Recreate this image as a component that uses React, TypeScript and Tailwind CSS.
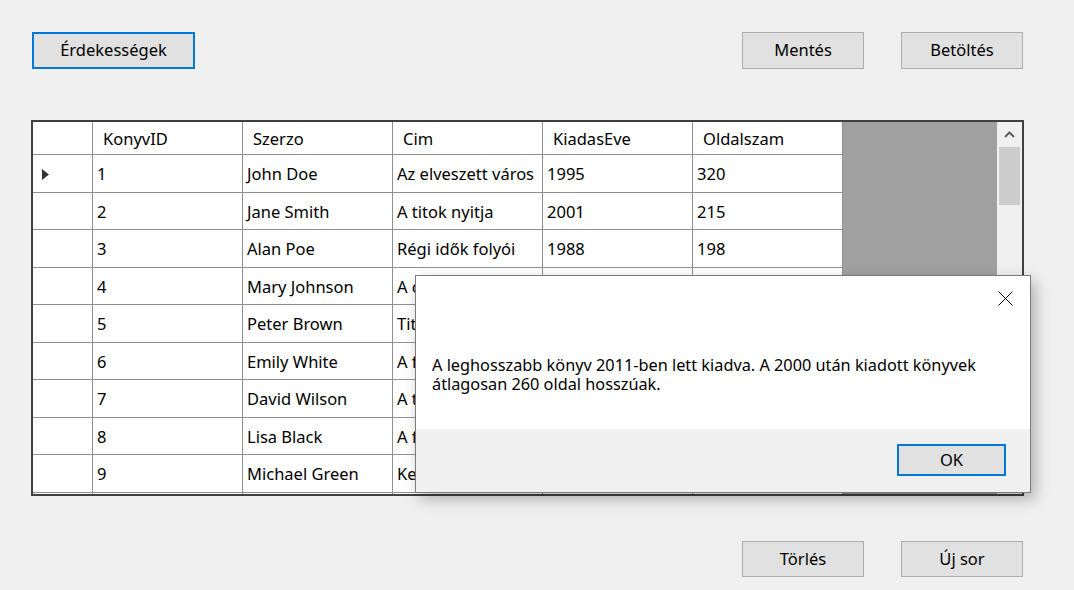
import React from 'react';

interface Book {
    id: number | string;
    szerzo: string;
    cim: string;
    ev: string;
    oldal: string;
}

const BOOKS: Book[] = [
    { id: 1, szerzo: 'John Doe', cim: 'Az elveszett város', ev: '1995', oldal: '320' },
    { id: 2, szerzo: 'Jane Smith', cim: 'A titok nyitja', ev: '2001', oldal: '215' },
    { id: 3, szerzo: 'Alan Poe', cim: 'Régi idők folyói', ev: '1988', oldal: '198' },
    { id: 4, szerzo: 'Mary Johnson', cim: 'A csend hangja', ev: '2011', oldal: '410' },
    { id: 5, szerzo: 'Peter Brown', cim: 'Titkok kertje', ev: '1999', oldal: '240' },
    { id: 6, szerzo: 'Emily White', cim: 'A fehér torony', ev: '2005', oldal: '280' },
    { id: 7, szerzo: 'David Wilson', cim: 'A tenger dala', ev: '2015', oldal: '190' },
    { id: 8, szerzo: 'Lisa Black', cim: 'A fekete hold', ev: '1992', oldal: '230' },
    { id: 9, szerzo: 'Michael Green', cim: 'Kert a város felett', ev: '2008', oldal: '205' },
    // only the top edge of this row shows above the grid's bottom border
    { id: '', szerzo: '', cim: '', ev: '', oldal: '' },
];

const HEADERS = ['KonyvID', 'Szerzo', 'Cim', 'KiadasEve', 'Oldalszam'];

// rows are 37.5px at this scale, so alternate 38 / 37
const ROW_H = ['h-[38px]', 'h-[37px]'];

const FONT = { fontFamily: '"Noto Sans", "Open Sans", sans-serif' };

const WinButton: React.FC<{ label: string; focused?: boolean; className?: string }> = ({ label, focused, className }) => (
    <button
        className={
            'flex items-center justify-center bg-[#e1e1e1] text-[16.5px] text-black ' +
            (focused ? 'border-2 border-[#0078d7] ' : 'border border-[#adadad] ') +
            (className ?? '')
        }
    >
        {label}
    </button>
);

const Cell: React.FC<{ children?: React.ReactNode; header?: boolean }> = ({ children, header }) => (
    <div
        className={
            'w-[150px] shrink-0 border-r border-[#8f8f8f] flex items-center whitespace-nowrap overflow-hidden pt-[2px] ' +
            (header ? 'pl-[10px]' : 'pl-[4px]')
        }
    >
        {children}
    </div>
);

const BookGrid: React.FC = () => (
    <div className="w-[993px] h-[376px] border-2 border-[#404040] flex overflow-hidden bg-[#a0a0a0]">
        <div className="w-[810px] shrink-0 bg-white text-[16.5px] text-black">
            <div className="flex h-[33px] border-b border-[#8f8f8f]">
                <div className="w-[60px] shrink-0 border-r border-[#8f8f8f]" />
                {HEADERS.map(h => (
                    <Cell key={h} header>{h}</Cell>
                ))}
            </div>
            {BOOKS.map((b, i) => (
                <div key={i} className={'flex border-b border-[#8f8f8f] ' + ROW_H[i % 2]}>
                    <div className="w-[60px] shrink-0 border-r border-[#8f8f8f] flex items-center pl-[9px] pt-[2px]">
                        {i === 0 && (
                            <svg width="8" height="11" viewBox="0 0 8 11">
                                <path d="M0 0 L7 5.5 L0 11 Z" fill="#333" />
                            </svg>
                        )}
                    </div>
                    <Cell>{b.id}</Cell>
                    <Cell>{b.szerzo}</Cell>
                    <Cell>{b.cim}</Cell>
                    <Cell>{b.ev}</Cell>
                    <Cell>{b.oldal}</Cell>
                </div>
            ))}
        </div>
        <div className="flex-1" />
        <div className="w-[25px] shrink-0 bg-[#f0f0f0] flex flex-col items-center">
            <div className="h-[25px] w-full flex items-center justify-center">
                <svg width="11" height="7" viewBox="0 0 11 7">
                    <path d="M1 6 L5.5 1.5 L10 6" stroke="#606060" strokeWidth="2" fill="none" />
                </svg>
            </div>
            <div className="w-[21px] h-[58px] bg-[#cdcdcd]" />
        </div>
    </div>
);

const MessageBox: React.FC = () => (
    <div className="absolute left-[415px] top-[275px] w-[616px] h-[218px] border border-[#7a7a7a] bg-white flex flex-col shadow-[4px_6px_14px_rgba(0,0,0,0.28)]">
        <div className="h-[153px] relative">
            <svg className="absolute right-[17px] top-[15px]" width="15" height="15" viewBox="0 0 15 15">
                <path d="M0.5 0.5 L14.5 14.5 M14.5 0.5 L0.5 14.5" stroke="#000" strokeWidth="1" />
            </svg>
            <p className="absolute left-[16px] top-[80px] text-[16.3px] leading-[19px] text-black w-[575px]">
                A leghosszabb könyv 2011-ben lett kiadva. A 2000 után kiadott könyvek átlagosan 260 oldal hosszúak.
            </p>
        </div>
        <div className="flex-1 bg-[#f0f0f0] flex justify-end items-start pt-[15px] pr-[24px]">
            <WinButton label="OK" focused className="w-[109px] h-[32px]" />
        </div>
    </div>
);

export default function App() {
    return (
        <div className="relative w-[1074px] h-[590px] bg-[#f0f0f0] overflow-hidden pt-[32px] pl-[31px] pr-[51px]" style={FONT}>
            <div className="flex justify-between">
                <WinButton label="Érdekességek" focused className="ml-[1px] w-[163px] h-[37px]" />
                <div className="flex gap-[37px]">
                    <WinButton label="Mentés" className="w-[122px] h-[37px]" />
                    <WinButton label="Betöltés" className="w-[122px] h-[37px]" />
                </div>
            </div>
            <div className="mt-[51px]">
                <BookGrid />
            </div>
            <div className="mt-[45px] flex justify-end gap-[37px]">
                <WinButton label="Törlés" className="w-[122px] h-[36px]" />
                <WinButton label="Új sor" className="w-[122px] h-[36px]" />
            </div>
            <MessageBox />
        </div>
    );
}
